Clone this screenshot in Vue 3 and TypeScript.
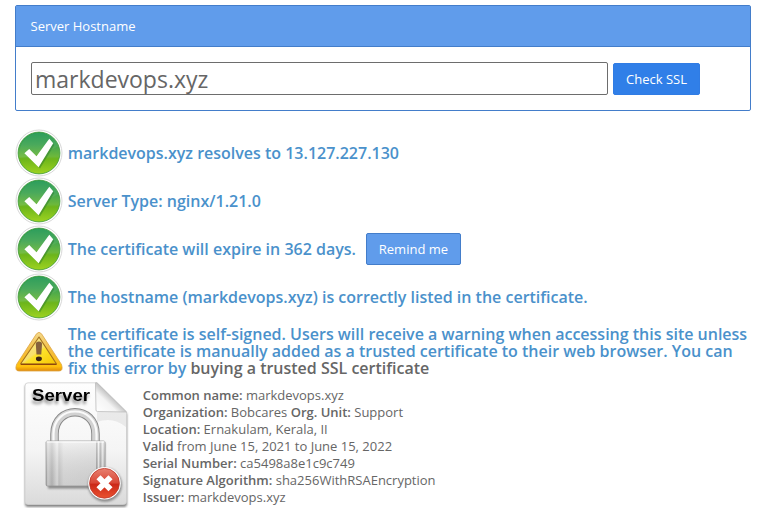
<script setup lang="ts">
import { ref } from 'vue'

interface Check {
  text: string
  remind?: boolean
}

const hostname = ref('markdevops.xyz')

const checks: Check[] = [
  { text: 'markdevops.xyz resolves to 13.127.227.130' },
  { text: 'Server Type: nginx/1.21.0' },
  { text: 'The certificate will expire in 362 days.', remind: true },
  { text: 'The hostname (markdevops.xyz) is correctly listed in the certificate.' },
]
</script>

<template>
  <main class="page">
    <section class="panel">
      <header class="panel-head">Server Hostname</header>
      <form class="panel-body" @submit.prevent>
        <input v-model="hostname" class="host" type="text" spellcheck="false" aria-label="Server Hostname" />
        <button class="btn primary" type="submit">Check SSL</button>
      </form>
    </section>

    <div v-for="(check, i) in checks" :key="i" class="row">
      <svg class="icon" viewBox="0 0 48 48" aria-hidden="true">
        <defs>
          <linearGradient :id="`green${i}`" x1="0" y1="0" x2="0" y2="1">
            <stop offset="0" stop-color="#1f9852" />
            <stop offset=".3" stop-color="#3fa452" />
            <stop offset=".58" stop-color="#6cb83c" />
            <stop offset=".64" stop-color="#6cb51b" />
            <stop offset="1" stop-color="#9ed321" />
          </linearGradient>
        </defs>
        <circle cx="24" cy="24" r="23" fill="#fff" stroke="#d3d3d3" stroke-width=".9" />
        <circle cx="24" cy="24" r="20.900" :fill="`url(#green${i})`" stroke="#3f9a38" stroke-width=".8" />
        <path d="M4.500 29C15 28 32 24 43.500 17C44.500 7 34 4 24 4C12 4 3 14 4.500 29Z" fill="#fff" opacity=".06" />
        <path d="M11 25.500L15 21.500L22.300 28.500L35.500 11.500L39.300 16L25 39.500Z" fill="#26752c" opacity=".45" />
        <path d="M9.400 24.200L14.200 19.900L21.500 27.300L34.300 9.700L38.200 14.300L23.600 38.300Z" fill="#fff" />
      </svg>
      <span class="message">{{ check.text }}</span>
      <button v-if="check.remind" class="btn remind" type="button">Remind me</button>
    </div>

    <div class="row warning">
      <svg class="icon" viewBox="0 0 48 48" aria-hidden="true">
        <defs>
          <linearGradient id="amber" x1="0" y1="0" x2="0" y2="1">
            <stop offset="0" stop-color="#f3d98c" />
            <stop offset=".5" stop-color="#f5bd3b" />
            <stop offset=".88" stop-color="#ffc10d" />
            <stop offset="1" stop-color="#e08a0b" />
          </linearGradient>
          <linearGradient id="yellow" x1="0" y1="0" x2="1" y2="1">
            <stop offset="0" stop-color="#f5e39a" />
            <stop offset=".5" stop-color="#f8e06a" />
            <stop offset=".55" stop-color="#fde32c" />
            <stop offset="1" stop-color="#f7c500" />
          </linearGradient>
        </defs>
        <path d="M21.500 5.800Q24 2.800 26.500 5.800L46.500 36.500Q48.500 43 44 43H4Q-.5 43 1.500 36.500Z" fill="url(#amber)" stroke="#dda445" stroke-width=".8" />
        <path d="M24 9L41.500 36H5.500Z" fill="url(#yellow)" stroke="#a3701f" stroke-width="1.100" stroke-linejoin="round" />
        <path d="M6 36.300H41.500" stroke="#90480b" stroke-width="1.200" />
        <path d="M20.800 16Q20.800 13.500 23.900 13.500Q27 13.500 27 16L26.300 26.500H21.500Z" fill="#85603d" />
        <ellipse cx="23.900" cy="30.800" rx="3" ry="2.400" fill="#3c2514" />
      </svg>
      <p class="message">
        The certificate is self-signed. Users will receive a warning when accessing this site unless<br />
        the certificate is manually added as a trusted certificate to their web browser. You can<br />
        fix this error by <a class="link">buying a trusted SSL certificate</a>
      </p>
    </div>

    <section class="cert">
      <svg class="server" viewBox="0 0 128 128" aria-hidden="true">
        <defs>
          <linearGradient id="paper" x1="0" y1="0" x2="0" y2="1">
            <stop offset="0" stop-color="#fefefe" />
            <stop offset=".55" stop-color="#f5f5f5" />
            <stop offset="1" stop-color="#dadada" />
          </linearGradient>
          <linearGradient id="fold" x1="0" y1="1" x2="1" y2="0">
            <stop offset="0" stop-color="#fff" />
            <stop offset=".35" stop-color="#f4f4f4" />
            <stop offset=".55" stop-color="#bbb" />
          </linearGradient>
          <linearGradient id="steel" x1="0" y1="0" x2="1" y2="0">
            <stop offset="0" stop-color="#999" />
            <stop offset=".03" stop-color="#ddd" />
            <stop offset=".1" stop-color="#bbb" />
            <stop offset=".19" stop-color="#eee" />
            <stop offset=".22" stop-color="#ccc" />
            <stop offset=".3" stop-color="#e6e6e6" />
            <stop offset=".84" stop-color="#e0e0e0" />
            <stop offset=".86" stop-color="#888" />
            <stop offset=".89" stop-color="#f5f5f5" />
            <stop offset=".92" stop-color="#999" />
            <stop offset=".96" stop-color="#eee" />
            <stop offset="1" stop-color="#999" />
          </linearGradient>
          <linearGradient id="shade" x1="0" y1="0" x2="0" y2="1">
            <stop offset="0" stop-color="#fff" stop-opacity=".45" />
            <stop offset="1" stop-color="#888" stop-opacity=".25" />
          </linearGradient>
          <linearGradient id="red" x1="0" y1="0" x2="0" y2="1">
            <stop offset="0" stop-color="#e88070" />
            <stop offset=".48" stop-color="#d94736" />
            <stop offset=".54" stop-color="#cc2818" />
            <stop offset="1" stop-color="#ea5330" />
          </linearGradient>
          <filter id="soft" x="-20%" y="-20%" width="140%" height="150%">
            <feGaussianBlur stdDeviation="1.100" />
          </filter>
        </defs>
        <path d="M12 5H82L112 34V124Q112 127 109 127H13Q10 127 10 124V7Q10 5 12 5Z" fill="#666" opacity=".8" filter="url(#soft)" />
        <path d="M13 2.800H82L111.500 32V121.500Q111.500 124.500 108.500 124.500H13Q10 124.500 10 121.500V6Q10 2.800 13 2.800Z" fill="url(#paper)" stroke="#cfcfcf" stroke-width=".8" />
        <path d="M82 32H111V47Q98 36 82 42Z" fill="#ddd" opacity=".55" />
        <path d="M80.500 2.800H82L111.500 32L82.500 31.500Q81 31.500 81 30Z" fill="url(#fold)" stroke="#bbb" stroke-width=".8" />
        <path d="M39.500 62V54C39.500 25 80.500 25 80.500 54V62" fill="none" stroke="#888" stroke-width="8.500" />
        <path d="M39.500 62V54C39.500 25 80.500 25 80.500 54V62" fill="none" stroke="#d2d2d2" stroke-width="6.700" />
        <path d="M38.500 62V54C38.500 24 81.500 24 81.500 54V62" fill="none" stroke="#fafafa" stroke-width="2.200" />
        <path d="M33 63H90V108.500H33Z" fill="#555" opacity=".65" filter="url(#soft)" />
        <rect x="31" y="61" width="59" height="45" rx="1.500" fill="url(#steel)" stroke="#999" stroke-width=".8" />
        <rect x="31" y="61" width="59" height="45" fill="url(#shade)" />
        <path d="M32 62H89" stroke="#fff" stroke-width="1" />
        <text x="17" y="21" class="server-label" textLength="58" lengthAdjust="spacingAndGlyphs">Server</text>
        <circle cx="90" cy="104.800" r="17" fill="#555" opacity=".6" filter="url(#soft)" />
        <circle cx="89.500" cy="103.300" r="16.300" fill="#fff" />
        <circle cx="89.500" cy="103.300" r="14.900" fill="url(#red)" stroke="#bd3426" stroke-width=".8" />
        <path d="M83.500 97.300L95.500 109.300M95.500 97.300L83.500 109.300" stroke="#fff" stroke-width="5.800" />
      </svg>
      <div class="details">
        <div><b>Common name:</b> markdevops.xyz</div>
        <div><b>Organization:</b> Bobcares <b>Org. Unit:</b> Support</div>
        <div><b>Location:</b> Ernakulam, Kerala, II</div>
        <div><b>Valid</b> from June 15, 2021 to June 15, 2022</div>
        <div><b>Serial Number:</b> ca5498a8e1c9c749</div>
        <div><b>Signature Algorithm:</b> sha256WithRSAEncryption</div>
        <div><b>Issuer:</b> markdevops.xyz</div>
      </div>
    </section>
  </main>
</template>

<style>
body {
  margin: 0;
  background: #fff;
}
</style>

<style scoped>
.page {
  box-sizing: border-box;
  width: 758px;
  height: 528px;
  padding: 5px 7px 0 15px;
  overflow: hidden;
  color: #666;
  font: 13px/17px "Open Sans", sans-serif;
}
.panel {
  box-sizing: border-box;
  height: 106px;
  margin-bottom: 18px;
  border: 1px solid #437dca;
  border-radius: 2px;
}
.panel-head {
  box-sizing: border-box;
  height: 41px;
  padding: 0 14.5px;
  border-bottom: 1px solid #437dca;
  background: #609ceb;
  color: #fff;
  line-height: 40px;
}
.panel-body {
  display: flex;
  align-items: flex-end;
  gap: 5px;
  padding: 15px;
}
.host {
  box-sizing: border-box;
  width: 577px;
  height: 33px;
  margin: 0;
  padding: 0 3px;
  border: 1px solid #6d6d6d;
  border-radius: 2px;
  outline: 0;
  background: #fff;
  color: #666;
  font: 23px/31px "Open Sans", sans-serif;
}
.btn {
  box-sizing: border-box;
  height: 32px;
  padding: 0;
  border: 1px solid #437dca;
  border-radius: 2px;
  background: #609ceb;
  color: #fff;
  font: 13px/30px "Open Sans", sans-serif;
}
.primary {
  width: 87px;
  border-color: #307ce4;
  background: #307fe8;
}
.remind {
  width: 95px;
  margin-left: 10px;
}
.row {
  display: flex;
  align-items: center;
  height: 48px;
}
.icon {
  flex: none;
  width: 48px;
  height: 48px;
  margin-right: 4.800px;
}
.message {
  margin: 0;
  color: #4a91cb;
  font-size: 16px;
  font-weight: 600;
  line-height: 17px;
  letter-spacing: -.004px;
  white-space: nowrap;
}
.warning {
  height: 61px;
}
.link {
  color: #666;
}
.cert {
  display: flex;
}
.server {
  flex: none;
  width: 128px;
  height: 128px;
  margin-top: -2px;
  margin-right: -.3px;
}
.server-label {
  font: bold 17px "Liberation Sans", Arial, sans-serif;
  fill: #000;
  filter: drop-shadow(-1px 3px 1.5px #888);
}
.details {
  padding-top: 5px;
  white-space: nowrap;
}
.details b {
  font-weight: 600;
}
</style>
